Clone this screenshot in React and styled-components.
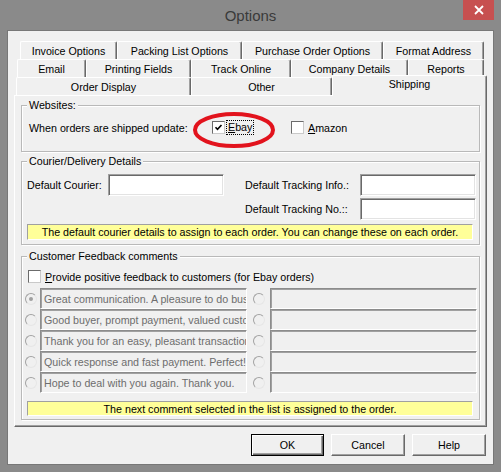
import React from 'react'
import styled, { createGlobalStyle } from 'styled-components'

const GlobalStyle = createGlobalStyle`
  html, body {
    margin: 0;
    padding: 0;
    background: #8a8a8a;
  }
  body {
    font-family: "Liberation Sans", Arial, sans-serif;
    font-size: 10.7px;
    color: #000;
  }
`

const Frame = styled.div`
  width: 501px;
  height: 472px;
  box-sizing: border-box;
  background: #8a8a8a;
  padding-bottom: 8px;
  display: flex;
  flex-direction: column;
`

const TitleBar = styled.div`
  height: 31px;
  flex-shrink: 0;
  display: grid;
  grid-template-columns: 1fr auto 1fr;
`

const Title = styled.div`
  grid-column: 2;
  align-self: center;
  font-size: 15px;
  color: #3a3a3a;
  padding-bottom: 1px;
`

const CloseButton = styled.div`
  grid-column: 3;
  justify-self: end;
  align-self: start;
  width: 31px;
  height: 20px;
  margin-right: 7px;
  background: #c75050;
  display: flex;
  align-items: center;
  justify-content: center;
`

const Client = styled.div`
  flex: 1;
  margin: 0 8px;
  background: #f0f0f0;
  box-shadow: 0 0 0 1px #777;
  padding: 10px 6px 0;
  display: flex;
  flex-direction: column;
`

const TabStrip = styled.div`
  display: flex;
  flex-direction: column;
`

const TabRow = styled.div`
  display: flex;
  height: 18px;
  margin-left: ${(p) => p.$indent}px;
`

const Tab = styled.div`
  box-sizing: border-box;
  width: ${(p) => p.$width}px;
  background: #f0f0f0;
  border-top: 1px solid #fff;
  border-left: 1px solid #fff;
  border-right: 1px solid #696969;
  box-shadow: inset -1px 0 #a0a0a0;
  border-radius: 2px 2px 0 0;
  display: flex;
  justify-content: center;
  align-items: ${(p) => (p.$selected ? 'flex-start' : 'center')};
  white-space: nowrap;
  ${(p) =>
    p.$selected &&
    `
    position: relative;
    z-index: 1;
    height: 21px;
    margin-top: -2px;
    padding-top: 2px;
  `}
`

const Panel = styled.div`
  box-sizing: border-box;
  height: 332px;
  border: 1px solid;
  border-color: #fff #696969 #696969 #fff;
  box-shadow: inset -1px -1px #a0a0a0;
  padding: 2px 6px 0;
  display: flex;
  flex-direction: column;
`

const Group = styled.fieldset`
  position: relative;
  box-sizing: border-box;
  height: ${(p) => p.$height}px;
  margin: ${(p) => p.$top || 0}px 0 0;
  padding: 0;
  min-inline-size: 0;
  border: 1px solid #b9b9b9;
  box-shadow: inset 1px 1px #fff, 1px 1px #fff;
`

const Legend = styled.legend`
  margin-left: 5px;
  padding: 0 2px;
  line-height: 14px;
  font-size: 10.7px;
  background: #f0f0f0;
`

const GroupBody = styled.div`
  padding: ${(p) => p.$pad};
  display: flex;
  flex-direction: column;
`

const Row = styled.div`
  display: flex;
  align-items: center;
  height: ${(p) => p.$height || 15}px;
  margin-left: ${(p) => p.$indent || 0}px;
`

const FieldLabel = styled.span`
  width: ${(p) => p.$width}px;
  white-space: nowrap;
`

const CheckItem = styled.label`
  display: flex;
  align-items: center;
  gap: ${(p) => p.$gap}px;
  width: ${(p) => (p.$width ? `${p.$width}px` : 'auto')};
  white-space: nowrap;
`

const Box = styled.span`
  box-sizing: border-box;
  width: 13px;
  height: 13px;
  background: #fff;
  border: 1px solid;
  border-color: #6b6b6b #c9c9c9 #c9c9c9 #6b6b6b;
  display: flex;
  align-items: center;
  justify-content: center;
  flex-shrink: 0;
`

const FocusText = styled.span`
  border: 1px dotted #000;
  padding: 0 1px;
  line-height: 13px;
`

const CourierGrid = styled.div`
  display: grid;
  grid-template-columns: 81px 116px 21px 115px 116px;
  grid-template-rows: 22px 22px;
  row-gap: 2px;
  align-items: center;
  white-space: nowrap;
`

const Input = styled.div`
  box-sizing: border-box;
  height: 22px;
  background: #fff;
  border: 1px solid;
  border-color: #a0a0a0 #fff #fff #a0a0a0;
  box-shadow: inset 1px 1px #696969, inset -1px -1px #e3e3e3;
`

const Note = styled.div`
  box-sizing: border-box;
  width: 446px;
  height: ${(p) => p.$height}px;
  margin: ${(p) => p.$top}px 0 0 ${(p) => p.$left || 0}px;
  background: #ffff99;
  border: 1px solid;
  border-color: #a0a0a0 #fff #fff #a0a0a0;
  display: flex;
  align-items: center;
  justify-content: center;
  white-space: nowrap;
`

const CommentGrid = styled.div`
  display: grid;
  grid-template-columns: 15px 207px 23px 207px;
  grid-auto-rows: 21px;
  margin-top: 5px;
`

const RadioCell = styled.div`
  display: flex;
  align-items: center;
  padding-left: ${(p) => p.$offset || 0}px;
`

const Radio = styled.span`
  position: relative;
  box-sizing: border-box;
  width: 12px;
  height: 12px;
  border-radius: 50%;
  border: 1px solid;
  border-color: #a2a2a2 #e6e6e6 #e6e6e6 #a2a2a2;
  background: #f0f0f0;
  ${(p) =>
    p.$checked &&
    `
    &::after {
      content: '';
      position: absolute;
      left: 3px;
      top: 3px;
      width: 4px;
      height: 4px;
      border-radius: 50%;
      background: #a0a0a0;
    }
  `}
`

const CommentBox = styled.div`
  box-sizing: border-box;
  background: #f0f0f0;
  border: 1px solid;
  border-color: #8c8c8c #fff #fff #8c8c8c;
  box-shadow: inset 1px 1px #a0a0a0;
  color: #6d6d6d;
  padding-left: 3px;
  display: flex;
  align-items: center;
  white-space: nowrap;
  overflow: hidden;
`

const Highlight = styled.svg`
  position: absolute;
  left: 167px;
  top: -4px;
  pointer-events: none;
`

const ButtonBar = styled.div`
  display: flex;
  justify-content: flex-end;
  gap: 7px;
  margin: 7px 1px 0 0;
`

const Button = styled.button`
  box-sizing: border-box;
  width: ${(p) => p.$width}px;
  height: 22px;
  padding: 0;
  font-family: inherit;
  font-size: 10.7px;
  color: #000;
  background: #f0f0f0;
  border: 1px solid;
  border-color: ${(p) => (p.$default ? '#000' : '#fff #696969 #696969 #fff')};
  box-shadow: ${(p) =>
    p.$default
      ? 'inset 1px 1px #fff, inset -1px -1px #696969, inset -2px -2px #a0a0a0'
      : 'inset -1px -1px #a0a0a0'};
`

const tabRows = [
  { indent: 6, tabs: [['Invoice Options', 97], ['Packing List Options', 125], ['Purchase Order Options', 141], ['Format Address', 101]] },
  { indent: 3, tabs: [['Email', 69], ['Printing Fields', 105], ['Track Online', 100], ['Company Details', 117], ['Reports', 76]] },
  { indent: 2, tabs: [['Order Display', 175], ['Other', 141], ['Shipping', 155, true]] },
]

const comments = [
  'Great communication. A pleasure to do business with you.',
  'Good buyer, prompt payment, valued customer.',
  'Thank you for an easy, pleasant transaction.',
  'Quick response and fast payment. Perfect!',
  'Hope to deal with you again. Thank you.',
]

const Tick = () => (
  <svg width="9" height="9" viewBox="0 0 9 9">
    <path d="M1.5 4.3 L3.5 6.4 L7.5 2" fill="none" stroke="#000" strokeWidth="1.6" />
  </svg>
)

const App = () => (
  <>
    <GlobalStyle />
    <Frame>
      <TitleBar>
        <Title>Options</Title>
        <CloseButton>
          <svg width="10" height="10" viewBox="0 0 10 10">
            <path d="M1 1 L9 9 M9 1 L1 9" stroke="#fff" strokeWidth="1.8" />
          </svg>
        </CloseButton>
      </TitleBar>

      <Client>
        <TabStrip>
          {tabRows.map((row, i) => (
            <TabRow key={i} $indent={row.indent}>
              {row.tabs.map(([label, width, selected]) => (
                <Tab key={label} $width={width} $selected={selected}>
                  {label}
                </Tab>
              ))}
            </TabRow>
          ))}
        </TabStrip>

        <Panel>
          <Group $height={54}>
            <Legend>Websites:</Legend>
            <GroupBody $pad="8px 0 0 7px">
              <Row>
                <FieldLabel $width={183}>When orders are shipped update:</FieldLabel>
                <CheckItem $gap={1} $width={79}>
                  <Box><Tick /></Box>
                  <FocusText><u>E</u>bay</FocusText>
                </CheckItem>
                <CheckItem $gap={4}>
                  <Box />
                  <span><u>A</u>mazon</span>
                </CheckItem>
              </Row>
            </GroupBody>
            <Highlight width="90" height="44" viewBox="0 0 90 44">
              <ellipse cx="45" cy="22" rx="39" ry="16" fill="none" stroke="#e2131d" strokeWidth="4" />
            </Highlight>
          </Group>

          <Group $height={91} $top={2}>
            <Legend>Courier/Delivery Details</Legend>
            <GroupBody $pad="6px 0 0 5px">
              <CourierGrid>
                <span>Default Courier:</span>
                <Input />
                <span />
                <span>Default Tracking Info.:</span>
                <Input />
                <span />
                <span />
                <span />
                <span>Default Tracking No.::</span>
                <Input />
              </CourierGrid>
              <Note $height={16} $top={4}>
                The default courier details to assign to each order. You can change these on each order.
              </Note>
            </GroupBody>
          </Group>

          <Group $height={171} $top={4}>
            <Legend>Customer Feedback comments</Legend>
            <GroupBody $pad="7px 0 0 3px">
              <Row $height={13} $indent={3}>
                <CheckItem $gap={4}>
                  <Box />
                  <span><u>P</u>rovide positive feedback to customers (for Ebay orders)</span>
                </CheckItem>
              </Row>
              <CommentGrid>
                {comments.map((text, i) => (
                  <React.Fragment key={i}>
                    <RadioCell>
                      <Radio $checked={i === 0} />
                    </RadioCell>
                    <CommentBox>{text}</CommentBox>
                    <RadioCell $offset={6}>
                      <Radio />
                    </RadioCell>
                    <CommentBox />
                  </React.Fragment>
                ))}
              </CommentGrid>
              <Note $height={15} $top={8} $left={2}>
                The next comment selected in the list is assigned to the order.
              </Note>
            </GroupBody>
          </Group>
        </Panel>

        <ButtonBar>
          <Button $width={73} $default>OK</Button>
          <Button $width={74}>Cancel</Button>
          <Button $width={74}>Help</Button>
        </ButtonBar>
      </Client>
    </Frame>
  </>
)

export default App
